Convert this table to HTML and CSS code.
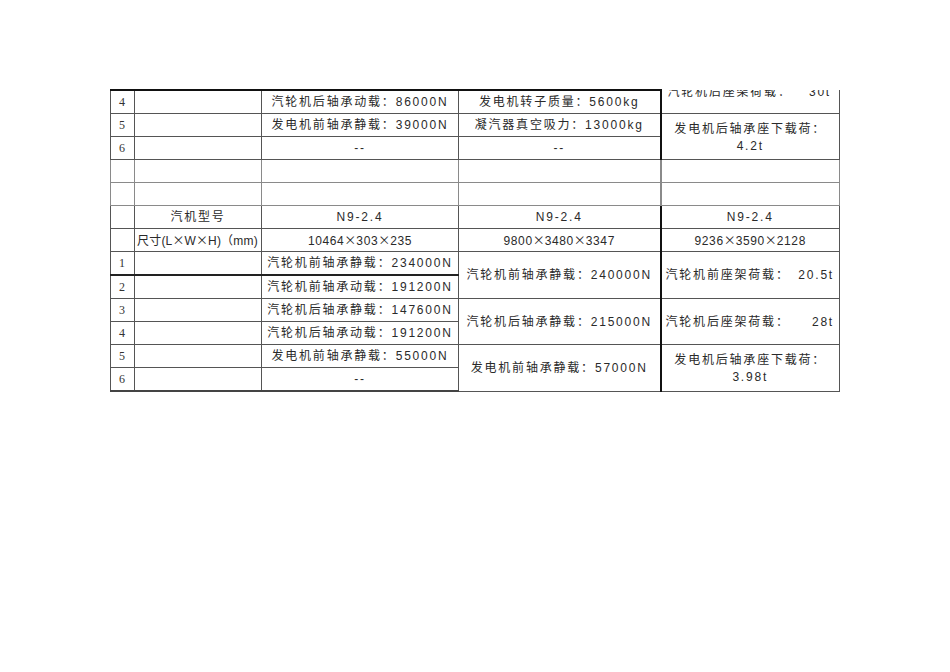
FILE: index.html
```html
<!DOCTYPE html>
<html lang="zh-CN">
<head>
<meta charset="utf-8">
<title>汽机参数表</title>
<link rel="stylesheet" href="styles.css">
</head>
<body>
<div class="page">
<table class="spec">
  <colgroup>
    <col class="c1"><col class="c2"><col class="c3"><col class="c4"><col class="c5">
  </colgroup>
  <tr class="r-top">
    <td class="num">4</td>
    <td></td>
    <td class="ctr">汽轮机后轴承动载：86000N</td>
    <td class="ctr thick-r">发电机转子质量：5600kg</td>
    <td class="cont"><div class="clip"><div class="kv"><span>汽轮机后座架荷载：</span><span>30t</span></div></div></td>
  </tr>
  <tr>
    <td class="num">5</td>
    <td></td>
    <td class="ctr">发电机前轴承静载：39000N</td>
    <td class="ctr thick-r">凝汽器真空吸力：13000kg</td>
    <td class="ctr two" rowspan="2">发电机后轴承座下载荷：<br>4.2t</td>
  </tr>
  <tr>
    <td class="num">6</td>
    <td></td>
    <td class="ctr">--</td>
    <td class="ctr thick-r">--</td>
  </tr>
  <tr class="gray">
    <td></td><td></td><td></td><td class="thick-r"></td><td></td>
  </tr>
  <tr class="gray">
    <td></td><td></td><td></td><td class="thick-r"></td><td></td>
  </tr>
  <tr>
    <td></td>
    <td class="ctr">汽机型号</td>
    <td class="ctr">N9-2.4</td>
    <td class="ctr thick-r">N9-2.4</td>
    <td class="ctr">N9-2.4</td>
  </tr>
  <tr>
    <td></td>
    <td class="lft tight">尺寸(L<span class="x">×</span>W<span class="x">×</span>H)（mm)</td>
    <td class="ctr dims">10464<span class="x">×</span>303<span class="x">×</span>235</td>
    <td class="ctr thick-r dims">9800<span class="x">×</span>3480<span class="x">×</span>3347</td>
    <td class="ctr dims">9236<span class="x">×</span>3590<span class="x">×</span>2128</td>
  </tr>
  <tr>
    <td class="num">1</td>
    <td></td>
    <td class="ctr">汽轮机前轴承静载：234000N</td>
    <td class="ctr thick-r" rowspan="2">汽轮机前轴承静载：240000N</td>
    <td rowspan="2"><div class="kv"><span>汽轮机前座架荷载：</span><span>20.5t</span></div></td>
  </tr>
  <tr>
    <td class="num bt">2</td>
    <td class="bt"></td>
    <td class="ctr bt">汽轮机前轴承动载：191200N</td>
  </tr>
  <tr>
    <td class="num">3</td>
    <td></td>
    <td class="ctr">汽轮机后轴承静载：147600N</td>
    <td class="ctr thick-r" rowspan="2">汽轮机后轴承静载：215000N</td>
    <td rowspan="2"><div class="kv"><span>汽轮机后座架荷载：</span><span>28t</span></div></td>
  </tr>
  <tr>
    <td class="num">4</td>
    <td></td>
    <td class="ctr">汽轮机后轴承动载：191200N</td>
  </tr>
  <tr>
    <td class="num">5</td>
    <td></td>
    <td class="ctr">发电机前轴承静载：55000N</td>
    <td class="ctr thick-r" rowspan="2">发电机前轴承静载：57000N</td>
    <td class="ctr two" rowspan="2">发电机后轴承座下载荷：<br>3.98t</td>
  </tr>
  <tr class="r-last">
    <td class="num">6</td>
    <td></td>
    <td class="ctr">--</td>
  </tr>
</table>
</div>
</body>
</html>
```

FILE: styles.css
```css
html, body {
  margin: 0;
  padding: 0;
  background: #ffffff;
}

.page {
  padding: 89px 0 0 110px;
}

.spec {
  border-collapse: collapse;
  table-layout: fixed;
  width: 729px;
  font-family: "Liberation Sans", "Noto Sans CJK SC", sans-serif;
  font-size: 12px;
  letter-spacing: 1.8px;
  color: #2a2a2a;
}

.c1 { width: 24px; }
.c2 { width: 127px; }
.c3 { width: 197px; }
.c4 { width: 202px; }
.c5 { width: 179px; }

.spec td {
  height: 22px;
  padding: 0;
  border: 1px solid #555555;
  line-height: 14px;
  vertical-align: middle;
  white-space: nowrap;
  overflow: hidden;
}

.spec tr.r-top td {
  border-top: 2px solid #111111;
}

.spec tr.r-top td.cont {
  border-top: none;
  vertical-align: top;
}

.spec tr.gray td {
  border-color: #8a8a8a;
}

.spec td.num {
  font-family: "Liberation Serif", "Noto Sans CJK SC", serif;
  padding-left: 8px;
  letter-spacing: 0;
  color: #333333;
}

.spec td.ctr {
  text-align: center;
}

.spec td.lft {
  text-align: left;
  padding-left: 2px;
}

.spec td.tight {
  letter-spacing: 0.2px;
}

.spec td.dims {
  letter-spacing: 0.6px;
}

.x {
  font-family: "Noto Sans CJK SC", sans-serif;
  font-size: 12px;
  letter-spacing: 0;
}

.spec td.thick-r {
  border-right: 2px solid #111111;
}

.spec td.bt {
  border-top: 2px solid #222222;
}

.spec td.two {
  line-height: 17px;
  padding-top: 2px;
}

.spec tr.r-last td {
  border-bottom: 2px solid #444444;
}

.clip {
  height: 22px;
  overflow: hidden;
}

.kv {
  display: flex;
  justify-content: space-between;
  padding: 0 5px 0 4px;
}

.clip .kv {
  margin-top: -5px;
  line-height: 14px;
  padding-right: 8px;
  padding-left: 6px;
}
```
